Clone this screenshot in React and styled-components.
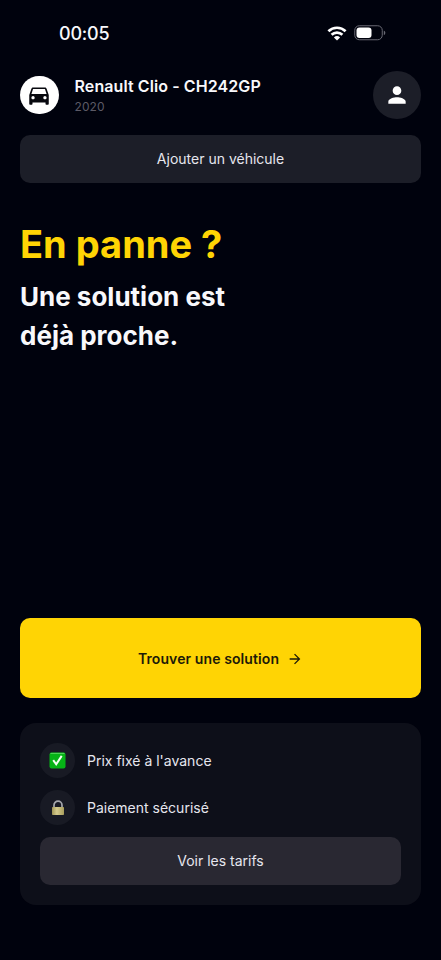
import React from 'react'
import styled, {createGlobalStyle, css} from 'styled-components'
import {MdArrowForward, MdDirectionsCar, MdPerson} from 'react-icons/md'

const color = {
	background: '#00020d',
	surface: '#1c1e28',
	card: '#0d0f19',
	muted: '#5c5a66',
	yellow: '#ffd404',
	white: '#f8f8fb',
}

const GlobalStyle = createGlobalStyle`
	* {
		box-sizing: border-box;
	}
	body {
		margin: 0;
		background: ${color.background};
		font-family: Inter, sans-serif;
	}
`

const MainText = css`
	margin: 0;
	padding: 0;
	white-space: nowrap;
`

const Screen = styled.div`
	display: flex;
	flex-direction: column;
	width: 441px;
	height: 960px;
	padding: 0 20px 55px;
	overflow: hidden;
	background: ${color.background};
	color: ${color.white};
`

const StatusBar = styled.div`
	display: flex;
	align-items: center;
	justify-content: space-between;
	height: 71px;
	padding: 0 35px 5px 39px;
`

const Clock = styled.span`
	${MainText}
	padding-top: 2px;
	font-size: 18px;
	font-weight: 500;
	line-height: 24px;
	letter-spacing: -0.2px;
`

const StatusIcons = styled.div`
	display: flex;
	align-items: center;
	gap: 7px;
`

const Header = styled.header`
	display: flex;
	align-items: center;
	height: 48px;
`

const Round = styled.div`
	display: flex;
	align-items: center;
	justify-content: center;
	flex: none;
	width: ${(props) => props.$size}px;
	height: ${(props) => props.$size}px;
	border-radius: 50%;
	background: ${(props) => props.$background};
	color: ${(props) => props.$color};
`

const Vehicle = styled.div`
	flex: 1;
	padding: 1px 0 0 16px;
`

const VehicleName = styled.p`
	${MainText}
	font-size: 16px;
	font-weight: 600;
	line-height: 22px;
	letter-spacing: 0.09px;
`

const VehicleYear = styled.p`
	${MainText}
	color: ${color.muted};
	font-size: 12px;
	line-height: 20px;
	letter-spacing: 0.1px;
`

const Button = styled.button`
	display: flex;
	align-items: center;
	justify-content: center;
	flex: none;
	width: 100%;
	height: 48px;
	padding: 0;
	border: 0;
	border-radius: 10px;
	background: ${(props) => props.$background};
	color: #e6e6ee;
	font-family: inherit;
	font-size: 14px;
	font-weight: 400;
	line-height: 20px;
`

const AddButton = styled(Button)`
	margin-top: 16px;
`

const FindButton = styled(Button)`
	gap: 8px;
	height: 80px;
	margin-top: auto;
	padding-top: 1px;
	color: #1d1a08;
	font-weight: 600;
	letter-spacing: 0.1px;
`

const Title = styled.h1`
	${MainText}
	margin-top: 32px;
	color: ${color.yellow};
	font-size: 38px;
	font-weight: 700;
	line-height: 58px;
`

const Subtitle = styled.h2`
	${MainText}
	margin-top: 4px;
	font-size: 26px;
	font-weight: 700;
	line-height: 39px;
`

const Card = styled.section`
	flex: none;
	height: 182px;
	margin-top: 25px;
	padding: 20px;
	border-radius: 16px;
	background: ${color.card};
`

const Feature = styled.div`
	display: flex;
	align-items: center;
	gap: 12px;
	height: 35px;
	margin-bottom: 12px;
`

const FeatureText = styled.p`
	${MainText}
	color: #e6e6ee;
	font-size: 14px;
	line-height: 20px;
`

const WifiIcon = () => (
	<svg width="20" height="15" viewBox="0 0 20 15" fill="none" stroke="#fff" strokeWidth="2.7">
		<path d="M1.4 5.2a12.4 12.4 0 0 1 17.2 0" />
		<path d="M4.6 8.7a7.8 7.8 0 0 1 10.8 0" />
		<path d="M10 14.4 6.9 11.4a4.5 4.5 0 0 1 6.2 0z" fill="#fff" stroke="none" />
	</svg>
)

const BatteryIcon = () => (
	<svg width="32" height="16" viewBox="0 0 32 16">
		<rect x="0.75" y="0.75" width="27.5" height="14" rx="4.5" fill="none" stroke="#686973" />
		<rect x="2.5" y="2.5" width="15" height="10.5" rx="3" fill="#fff" />
		<path d="M29.8 5.4q1.6.7 1.6 2.4t-1.6 2.4z" fill="#686973" />
	</svg>
)

const CheckIcon = () => (
	<svg width="17" height="17" viewBox="0 0 17 17">
		<rect x="0.5" y="0.5" width="16" height="16" rx="2" fill="#06b416" />
		<path d="M1.5 1.4h14" stroke="#55d75c" strokeWidth="1" />
		<path d="M4.2 8.1 7.2 12.3 12.7 3.9" fill="none" stroke="#f3fff1" strokeWidth="2" />
	</svg>
)

const LockIcon = () => (
	<svg width="14" height="16" viewBox="0 0 14 16">
		<defs>
			<linearGradient id="brass">
				<stop offset="0" stopColor="#a19657" />
				<stop offset="0.4" stopColor="#d5cb8d" />
				<stop offset="1" stopColor="#a99e5d" />
			</linearGradient>
		</defs>
		<path d="M3 8V5.2a4 4 0 0 1 8 0V8" fill="none" stroke="#a5a7ad" strokeWidth="1.7" />
		<rect x="1" y="7" width="12" height="8" rx="0.8" fill="url(#brass)" />
	</svg>
)

const App = () => {
	return (
		<>
			<GlobalStyle />
			<Screen>
				<StatusBar>
					<Clock>00:05</Clock>
					<StatusIcons>
						<WifiIcon />
						<BatteryIcon />
					</StatusIcons>
				</StatusBar>
				<Header>
					<Round $size={38.5} $background="#fff" $color="#08090f">
						<MdDirectionsCar size={26} />
					</Round>
					<Vehicle>
						<VehicleName>Renault Clio - CH242GP</VehicleName>
						<VehicleYear>2020</VehicleYear>
					</Vehicle>
					<Round $size={48} $background={color.surface} $color="#fff">
						<MdPerson size={26} />
					</Round>
				</Header>
				<AddButton $background={color.surface}>Ajouter un véhicule</AddButton>
				<Title>En panne ?</Title>
				<Subtitle>
					Une solution est
					<br />
					déjà proche.
				</Subtitle>
				<FindButton $background={color.yellow}>
					Trouver une solution
					<MdArrowForward size={16} />
				</FindButton>
				<Card>
					<Feature>
						<Round $size={35} $background="#181a24">
							<CheckIcon />
						</Round>
						<FeatureText>Prix fixé à l'avance</FeatureText>
					</Feature>
					<Feature>
						<Round $size={35} $background="#181a24">
							<LockIcon />
						</Round>
						<FeatureText>Paiement sécurisé</FeatureText>
					</Feature>
					<Button $background="#292832">Voir les tarifs</Button>
				</Card>
			</Screen>
		</>
	)
}

export default App
